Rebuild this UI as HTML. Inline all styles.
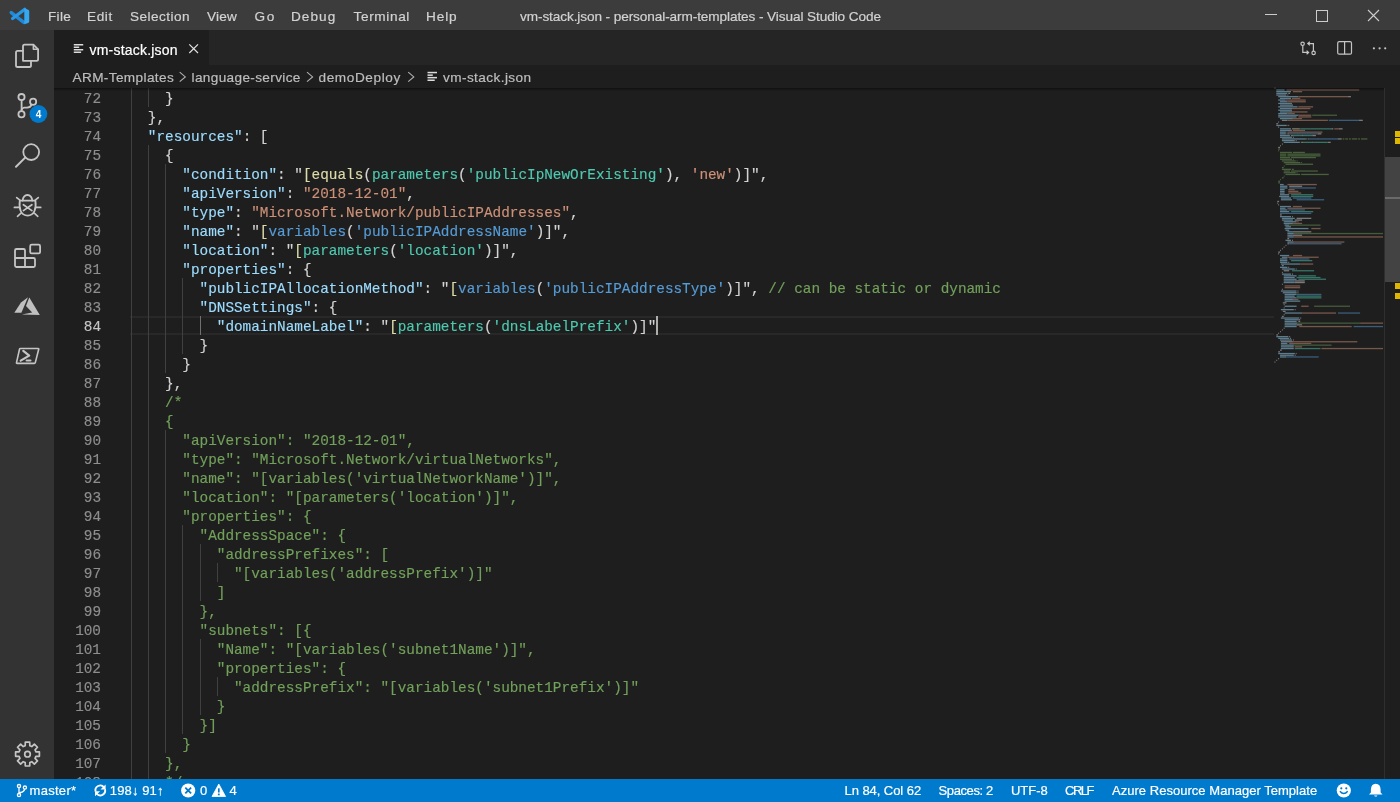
<!DOCTYPE html>
<html><head><meta charset="utf-8">
<style>
html,body{margin:0;padding:0;}
body{width:1400px;height:802px;overflow:hidden;position:relative;background:#1e1e1e;font-family:"Liberation Sans",sans-serif;}
.abs{position:absolute;}
#title{position:absolute;left:0;top:0;width:1400px;height:30px;background:#3c3c3c;}
.menu{position:absolute;top:0;height:30px;line-height:31px;font-size:13.6px;color:#cccccc;white-space:nowrap;}
#wtitle{position:absolute;top:0;left:0;width:1400px;text-align:center;height:30px;line-height:31px;font-size:13.4px;color:#cccccc;}
#act{position:absolute;left:0;top:30px;width:54px;height:749px;background:#333333;}
#tabs{position:absolute;left:54px;top:30px;width:1346px;height:35px;background:#252526;}
#tab{position:absolute;left:54px;top:30px;width:155px;height:35px;background:#1e1e1e;}
.ui{position:absolute;white-space:nowrap;}
#bc{position:absolute;left:54px;top:65px;width:1346px;height:23px;background:#1e1e1e;}
#editor{position:absolute;left:54px;top:88px;width:1346px;height:691px;background:#1e1e1e;overflow:hidden;}
.ln{-webkit-text-stroke:0.15px currentColor;position:absolute;left:130.6px;height:19px;line-height:19px;white-space:pre;font-family:"Liberation Mono",monospace;font-size:14.364px;}
.num{-webkit-text-stroke:0.15px currentColor;position:absolute;left:54px;width:47px;text-align:right;height:19px;line-height:19px;font-family:"Liberation Mono",monospace;font-size:14.364px;color:#8e8e8e;}
.num.act{color:#c6c6c6;}
.g{position:absolute;width:1px;height:19px;background:#404040;}
.g.ga{background:#707070;}
#status{position:absolute;left:0;top:779px;width:1400px;height:23px;background:#007acc;color:#ffffff;}
.st{position:absolute;top:0;height:23px;line-height:23px;font-size:12.8px;white-space:nowrap;color:#fff;}
svg{position:absolute;overflow:visible;}
.u{position:absolute;white-space:nowrap;-webkit-text-stroke:0.2px currentColor;}
</style></head><body>
<!-- title bar -->
<div id="title"></div>
<svg style="left:0;top:0" width="40" height="30" viewBox="0 0 40 30">
  <path d="M11.2 12.6 L23.8 22.4" stroke="#1f8ad8" stroke-width="3.4" stroke-linecap="round"/>
  <path d="M24.8 9.2 L12.6 18.6" stroke="#2797e6" stroke-width="3.2" stroke-linecap="round"/>
  <path d="M24.3 8.2 L28.2 9.8 Q29.2 10.2 29.2 11.2 V21.6 Q29.2 22.6 28.2 23 L24.3 24.2 Z" fill="#35a8f2"/>
</svg>
<!-- window controls -->
<div class="abs" style="left:1265px;top:14px;width:12px;height:1px;background:#cccccc"></div>
<div class="abs" style="left:1316px;top:10px;width:10px;height:10px;border:1px solid #cccccc"></div>
<svg style="left:1367px;top:9px" width="13" height="13" viewBox="0 0 13 13"><path d="M1 1 L12 12 M12 1 L1 12" stroke="#cccccc" stroke-width="1.1"/></svg>

<!-- activity bar -->
<div id="act"></div>

<!-- tabs -->
<div id="tabs"></div>
<div id="tab"></div>

<!-- breadcrumbs -->
<div id="bc"></div>

<!-- editor -->
<div id="editor"></div>
<div class="abs" style="left:130px;top:316px;width:1144px;height:15px;border-top:2px solid #282828;border-bottom:2px solid #282828"></div>
<div class="g" style="left:130.6px;top:88px"></div>
<div class="g" style="left:147.8px;top:88px"></div>
<div class="g" style="left:130.6px;top:107px"></div>
<div class="g" style="left:130.6px;top:126px"></div>
<div class="g" style="left:130.6px;top:145px"></div>
<div class="g" style="left:147.8px;top:145px"></div>
<div class="g" style="left:130.6px;top:164px"></div>
<div class="g" style="left:147.8px;top:164px"></div>
<div class="g" style="left:165.1px;top:164px"></div>
<div class="g" style="left:130.6px;top:183px"></div>
<div class="g" style="left:147.8px;top:183px"></div>
<div class="g" style="left:165.1px;top:183px"></div>
<div class="g" style="left:130.6px;top:202px"></div>
<div class="g" style="left:147.8px;top:202px"></div>
<div class="g" style="left:165.1px;top:202px"></div>
<div class="g" style="left:130.6px;top:221px"></div>
<div class="g" style="left:147.8px;top:221px"></div>
<div class="g" style="left:165.1px;top:221px"></div>
<div class="g" style="left:130.6px;top:240px"></div>
<div class="g" style="left:147.8px;top:240px"></div>
<div class="g" style="left:165.1px;top:240px"></div>
<div class="g" style="left:130.6px;top:259px"></div>
<div class="g" style="left:147.8px;top:259px"></div>
<div class="g" style="left:165.1px;top:259px"></div>
<div class="g" style="left:130.6px;top:278px"></div>
<div class="g" style="left:147.8px;top:278px"></div>
<div class="g" style="left:165.1px;top:278px"></div>
<div class="g" style="left:182.3px;top:278px"></div>
<div class="g" style="left:130.6px;top:297px"></div>
<div class="g" style="left:147.8px;top:297px"></div>
<div class="g" style="left:165.1px;top:297px"></div>
<div class="g" style="left:182.3px;top:297px"></div>
<div class="g" style="left:130.6px;top:316px"></div>
<div class="g" style="left:147.8px;top:316px"></div>
<div class="g" style="left:165.1px;top:316px"></div>
<div class="g" style="left:182.3px;top:316px"></div>
<div class="g ga" style="left:199.6px;top:316px"></div>
<div class="g" style="left:130.6px;top:335px"></div>
<div class="g" style="left:147.8px;top:335px"></div>
<div class="g" style="left:165.1px;top:335px"></div>
<div class="g" style="left:182.3px;top:335px"></div>
<div class="g" style="left:130.6px;top:354px"></div>
<div class="g" style="left:147.8px;top:354px"></div>
<div class="g" style="left:165.1px;top:354px"></div>
<div class="g" style="left:130.6px;top:373px"></div>
<div class="g" style="left:147.8px;top:373px"></div>
<div class="g" style="left:130.6px;top:392px"></div>
<div class="g" style="left:147.8px;top:392px"></div>
<div class="g" style="left:130.6px;top:411px"></div>
<div class="g" style="left:147.8px;top:411px"></div>
<div class="g" style="left:130.6px;top:430px"></div>
<div class="g" style="left:147.8px;top:430px"></div>
<div class="g" style="left:165.1px;top:430px"></div>
<div class="g" style="left:130.6px;top:449px"></div>
<div class="g" style="left:147.8px;top:449px"></div>
<div class="g" style="left:165.1px;top:449px"></div>
<div class="g" style="left:130.6px;top:468px"></div>
<div class="g" style="left:147.8px;top:468px"></div>
<div class="g" style="left:165.1px;top:468px"></div>
<div class="g" style="left:130.6px;top:487px"></div>
<div class="g" style="left:147.8px;top:487px"></div>
<div class="g" style="left:165.1px;top:487px"></div>
<div class="g" style="left:130.6px;top:506px"></div>
<div class="g" style="left:147.8px;top:506px"></div>
<div class="g" style="left:165.1px;top:506px"></div>
<div class="g" style="left:130.6px;top:525px"></div>
<div class="g" style="left:147.8px;top:525px"></div>
<div class="g" style="left:165.1px;top:525px"></div>
<div class="g" style="left:182.3px;top:525px"></div>
<div class="g" style="left:130.6px;top:544px"></div>
<div class="g" style="left:147.8px;top:544px"></div>
<div class="g" style="left:165.1px;top:544px"></div>
<div class="g" style="left:182.3px;top:544px"></div>
<div class="g" style="left:199.6px;top:544px"></div>
<div class="g" style="left:130.6px;top:563px"></div>
<div class="g" style="left:147.8px;top:563px"></div>
<div class="g" style="left:165.1px;top:563px"></div>
<div class="g" style="left:182.3px;top:563px"></div>
<div class="g" style="left:199.6px;top:563px"></div>
<div class="g" style="left:216.8px;top:563px"></div>
<div class="g" style="left:130.6px;top:582px"></div>
<div class="g" style="left:147.8px;top:582px"></div>
<div class="g" style="left:165.1px;top:582px"></div>
<div class="g" style="left:182.3px;top:582px"></div>
<div class="g" style="left:199.6px;top:582px"></div>
<div class="g" style="left:130.6px;top:601px"></div>
<div class="g" style="left:147.8px;top:601px"></div>
<div class="g" style="left:165.1px;top:601px"></div>
<div class="g" style="left:182.3px;top:601px"></div>
<div class="g" style="left:130.6px;top:620px"></div>
<div class="g" style="left:147.8px;top:620px"></div>
<div class="g" style="left:165.1px;top:620px"></div>
<div class="g" style="left:182.3px;top:620px"></div>
<div class="g" style="left:130.6px;top:639px"></div>
<div class="g" style="left:147.8px;top:639px"></div>
<div class="g" style="left:165.1px;top:639px"></div>
<div class="g" style="left:182.3px;top:639px"></div>
<div class="g" style="left:199.6px;top:639px"></div>
<div class="g" style="left:130.6px;top:658px"></div>
<div class="g" style="left:147.8px;top:658px"></div>
<div class="g" style="left:165.1px;top:658px"></div>
<div class="g" style="left:182.3px;top:658px"></div>
<div class="g" style="left:199.6px;top:658px"></div>
<div class="g" style="left:130.6px;top:677px"></div>
<div class="g" style="left:147.8px;top:677px"></div>
<div class="g" style="left:165.1px;top:677px"></div>
<div class="g" style="left:182.3px;top:677px"></div>
<div class="g" style="left:199.6px;top:677px"></div>
<div class="g" style="left:216.8px;top:677px"></div>
<div class="g" style="left:130.6px;top:696px"></div>
<div class="g" style="left:147.8px;top:696px"></div>
<div class="g" style="left:165.1px;top:696px"></div>
<div class="g" style="left:182.3px;top:696px"></div>
<div class="g" style="left:199.6px;top:696px"></div>
<div class="g" style="left:130.6px;top:715px"></div>
<div class="g" style="left:147.8px;top:715px"></div>
<div class="g" style="left:165.1px;top:715px"></div>
<div class="g" style="left:182.3px;top:715px"></div>
<div class="g" style="left:130.6px;top:734px"></div>
<div class="g" style="left:147.8px;top:734px"></div>
<div class="g" style="left:165.1px;top:734px"></div>
<div class="g" style="left:130.6px;top:753px"></div>
<div class="g" style="left:147.8px;top:753px"></div>
<div class="g" style="left:130.6px;top:772px"></div>
<div class="g" style="left:147.8px;top:772px"></div>
<div style="position:absolute;left:0;top:0;width:1400px;height:802px;will-change:transform">
<div class="num" style="top:89.5px">72</div>
<div class="num" style="top:108.5px">73</div>
<div class="num" style="top:127.5px">74</div>
<div class="num" style="top:146.5px">75</div>
<div class="num" style="top:165.5px">76</div>
<div class="num" style="top:184.5px">77</div>
<div class="num" style="top:203.5px">78</div>
<div class="num" style="top:222.5px">79</div>
<div class="num" style="top:241.5px">80</div>
<div class="num" style="top:260.5px">81</div>
<div class="num" style="top:279.5px">82</div>
<div class="num" style="top:298.5px">83</div>
<div class="num act" style="top:317.5px">84</div>
<div class="num" style="top:336.5px">85</div>
<div class="num" style="top:355.5px">86</div>
<div class="num" style="top:374.5px">87</div>
<div class="num" style="top:393.5px">88</div>
<div class="num" style="top:412.5px">89</div>
<div class="num" style="top:431.5px">90</div>
<div class="num" style="top:450.5px">91</div>
<div class="num" style="top:469.5px">92</div>
<div class="num" style="top:488.5px">93</div>
<div class="num" style="top:507.5px">94</div>
<div class="num" style="top:526.5px">95</div>
<div class="num" style="top:545.5px">96</div>
<div class="num" style="top:564.5px">97</div>
<div class="num" style="top:583.5px">98</div>
<div class="num" style="top:602.5px">99</div>
<div class="num" style="top:621.5px">100</div>
<div class="num" style="top:640.5px">101</div>
<div class="num" style="top:659.5px">102</div>
<div class="num" style="top:678.5px">103</div>
<div class="num" style="top:697.5px">104</div>
<div class="num" style="top:716.5px">105</div>
<div class="num" style="top:735.5px">106</div>
<div class="num" style="top:754.5px">107</div>
<div class="num" style="top:773.5px">108</div>
<div class="ln" style="top:89.5px"><span style="color:#d4d4d4">    }</span></div>
<div class="ln" style="top:108.5px"><span style="color:#d4d4d4">  },</span></div>
<div class="ln" style="top:127.5px"><span style="color:#d4d4d4">  </span><span style="color:#9cdcfe">&quot;resources&quot;</span><span style="color:#d4d4d4">: [</span></div>
<div class="ln" style="top:146.5px"><span style="color:#d4d4d4">    {</span></div>
<div class="ln" style="top:165.5px"><span style="color:#d4d4d4">      </span><span style="color:#9cdcfe">&quot;condition&quot;</span><span style="color:#d4d4d4">: &quot;</span><span style="color:#dcdcaa">[</span><span style="color:#dcdcaa">equals</span><span style="color:#d4d4d4">(</span><span style="color:#4ec9b0">parameters</span><span style="color:#d4d4d4">(</span><span style="color:#4ec9b0">&#x27;publicIpNewOrExisting&#x27;</span><span style="color:#d4d4d4">), </span><span style="color:#ce9178">&#x27;new&#x27;</span><span style="color:#d4d4d4">)]&quot;,</span></div>
<div class="ln" style="top:184.5px"><span style="color:#d4d4d4">      </span><span style="color:#9cdcfe">&quot;apiVersion&quot;</span><span style="color:#d4d4d4">: </span><span style="color:#ce9178">&quot;2018-12-01&quot;</span><span style="color:#d4d4d4">,</span></div>
<div class="ln" style="top:203.5px"><span style="color:#d4d4d4">      </span><span style="color:#9cdcfe">&quot;type&quot;</span><span style="color:#d4d4d4">: </span><span style="color:#ce9178">&quot;Microsoft.Network/publicIPAddresses&quot;</span><span style="color:#d4d4d4">,</span></div>
<div class="ln" style="top:222.5px"><span style="color:#d4d4d4">      </span><span style="color:#9cdcfe">&quot;name&quot;</span><span style="color:#d4d4d4">: &quot;</span><span style="color:#dcdcaa">[</span><span style="color:#569cd6">variables</span><span style="color:#d4d4d4">(</span><span style="color:#569cd6">&#x27;publicIPAddressName&#x27;</span><span style="color:#d4d4d4">)]&quot;,</span></div>
<div class="ln" style="top:241.5px"><span style="color:#d4d4d4">      </span><span style="color:#9cdcfe">&quot;location&quot;</span><span style="color:#d4d4d4">: &quot;</span><span style="color:#dcdcaa">[</span><span style="color:#4ec9b0">parameters</span><span style="color:#d4d4d4">(</span><span style="color:#4ec9b0">&#x27;location&#x27;</span><span style="color:#d4d4d4">)]&quot;,</span></div>
<div class="ln" style="top:260.5px"><span style="color:#d4d4d4">      </span><span style="color:#9cdcfe">&quot;properties&quot;</span><span style="color:#d4d4d4">: {</span></div>
<div class="ln" style="top:279.5px"><span style="color:#d4d4d4">        </span><span style="color:#9cdcfe">&quot;publicIPAllocationMethod&quot;</span><span style="color:#d4d4d4">: &quot;</span><span style="color:#dcdcaa">[</span><span style="color:#569cd6">variables</span><span style="color:#d4d4d4">(</span><span style="color:#569cd6">&#x27;publicIPAddressType&#x27;</span><span style="color:#d4d4d4">)]&quot;, </span><span style="color:#72a15b">// can be static or dynamic</span></div>
<div class="ln" style="top:298.5px"><span style="color:#d4d4d4">        </span><span style="color:#9cdcfe">&quot;DNSSettings&quot;</span><span style="color:#d4d4d4">: {</span></div>
<div class="ln" style="top:317.5px"><span style="color:#d4d4d4">          </span><span style="color:#9cdcfe">&quot;domainNameLabel&quot;</span><span style="color:#d4d4d4">: &quot;</span><span style="color:#dcdcaa">[</span><span style="color:#4ec9b0">parameters</span><span style="color:#d4d4d4">(</span><span style="color:#4ec9b0">&#x27;dnsLabelPrefix&#x27;</span><span style="color:#d4d4d4">)]&quot;</span></div>
<div class="ln" style="top:336.5px"><span style="color:#d4d4d4">        }</span></div>
<div class="ln" style="top:355.5px"><span style="color:#d4d4d4">      }</span></div>
<div class="ln" style="top:374.5px"><span style="color:#d4d4d4">    },</span></div>
<div class="ln" style="top:393.5px"><span style="color:#72a15b">    /*</span></div>
<div class="ln" style="top:412.5px"><span style="color:#72a15b">    {</span></div>
<div class="ln" style="top:431.5px"><span style="color:#72a15b">      &quot;apiVersion&quot;: &quot;2018-12-01&quot;,</span></div>
<div class="ln" style="top:450.5px"><span style="color:#72a15b">      &quot;type&quot;: &quot;Microsoft.Network/virtualNetworks&quot;,</span></div>
<div class="ln" style="top:469.5px"><span style="color:#72a15b">      &quot;name&quot;: &quot;[variables(&#x27;virtualNetworkName&#x27;)]&quot;,</span></div>
<div class="ln" style="top:488.5px"><span style="color:#72a15b">      &quot;location&quot;: &quot;[parameters(&#x27;location&#x27;)]&quot;,</span></div>
<div class="ln" style="top:507.5px"><span style="color:#72a15b">      &quot;properties&quot;: {</span></div>
<div class="ln" style="top:526.5px"><span style="color:#72a15b">        &quot;AddressSpace&quot;: {</span></div>
<div class="ln" style="top:545.5px"><span style="color:#72a15b">          &quot;addressPrefixes&quot;: [</span></div>
<div class="ln" style="top:564.5px"><span style="color:#72a15b">            &quot;[variables(&#x27;addressPrefix&#x27;)]&quot;</span></div>
<div class="ln" style="top:583.5px"><span style="color:#72a15b">          ]</span></div>
<div class="ln" style="top:602.5px"><span style="color:#72a15b">        },</span></div>
<div class="ln" style="top:621.5px"><span style="color:#72a15b">        &quot;subnets&quot;: [{</span></div>
<div class="ln" style="top:640.5px"><span style="color:#72a15b">          &quot;Name&quot;: &quot;[variables(&#x27;subnet1Name&#x27;)]&quot;,</span></div>
<div class="ln" style="top:659.5px"><span style="color:#72a15b">          &quot;properties&quot;: {</span></div>
<div class="ln" style="top:678.5px"><span style="color:#72a15b">            &quot;addressPrefix&quot;: &quot;[variables(&#x27;subnet1Prefix&#x27;)]&quot;</span></div>
<div class="ln" style="top:697.5px"><span style="color:#72a15b">          }</span></div>
<div class="ln" style="top:716.5px"><span style="color:#72a15b">        }]</span></div>
<div class="ln" style="top:735.5px"><span style="color:#72a15b">      }</span></div>
<div class="ln" style="top:754.5px"><span style="color:#72a15b">    },</span></div>
<div class="ln" style="top:773.5px"><span style="color:#72a15b">    */</span></div>
</div>
<svg style="left:0;top:0" width="1400" height="802"><g opacity="0.5"><rect x="1274.5" y="87.6" width="0.9" height="1.3" fill="#d4d4d4"/><rect x="1276.3" y="89.3" width="8.3" height="1.3" fill="#9cdcfe"/><rect x="1286.5" y="89.3" width="72.7" height="1.3" fill="#ce9178"/><rect x="1276.3" y="91.0" width="14.7" height="1.3" fill="#9cdcfe"/><rect x="1292.9" y="91.0" width="9.2" height="1.3" fill="#ce9178"/><rect x="1276.3" y="92.7" width="11.0" height="1.3" fill="#9cdcfe"/><rect x="1288.3" y="92.7" width="1.8" height="1.3" fill="#d4d4d4"/><rect x="1276.3" y="94.4" width="10.1" height="1.3" fill="#9cdcfe"/><rect x="1287.4" y="94.4" width="0.9" height="1.3" fill="#d4d4d4"/><rect x="1278.2" y="96.0" width="20.2" height="1.3" fill="#9cdcfe"/><rect x="1298.4" y="96.0" width="49.7" height="1.3" fill="#ce9178"/><rect x="1348.1" y="96.0" width="2.8" height="1.3" fill="#d4d4d4"/><rect x="1280.0" y="97.7" width="11.0" height="1.3" fill="#9cdcfe"/><rect x="1292.0" y="97.7" width="8.3" height="1.3" fill="#ce9178"/><rect x="1278.2" y="99.4" width="7.4" height="1.3" fill="#9cdcfe"/><rect x="1285.5" y="99.4" width="20.2" height="1.3" fill="#ce9178"/><rect x="1280.0" y="101.1" width="7.4" height="1.3" fill="#9cdcfe"/><rect x="1287.4" y="101.1" width="18.4" height="1.3" fill="#ce9178"/><rect x="1278.2" y="102.8" width="12.0" height="1.3" fill="#9cdcfe"/><rect x="1290.1" y="102.8" width="1.8" height="1.3" fill="#d4d4d4"/><rect x="1280.0" y="104.5" width="12.9" height="1.3" fill="#9cdcfe"/><rect x="1278.2" y="106.2" width="19.3" height="1.3" fill="#9cdcfe"/><rect x="1298.4" y="106.2" width="14.7" height="1.3" fill="#ce9178"/><rect x="1280.0" y="107.9" width="12.0" height="1.3" fill="#9cdcfe"/><rect x="1292.0" y="107.9" width="18.4" height="1.3" fill="#ce9178"/><rect x="1278.2" y="109.6" width="12.0" height="1.3" fill="#9cdcfe"/><rect x="1290.1" y="109.6" width="1.8" height="1.3" fill="#d4d4d4"/><rect x="1280.0" y="111.3" width="12.0" height="1.3" fill="#9cdcfe"/><rect x="1292.0" y="111.3" width="15.6" height="1.3" fill="#ce9178"/><rect x="1278.2" y="112.9" width="9.2" height="1.3" fill="#9cdcfe"/><rect x="1287.4" y="112.9" width="7.4" height="1.3" fill="#ce9178"/><rect x="1278.2" y="114.6" width="20.2" height="1.3" fill="#9cdcfe"/><rect x="1298.4" y="114.6" width="12.9" height="1.3" fill="#ce9178"/><rect x="1312.2" y="114.6" width="24.8" height="1.3" fill="#6a9955"/><rect x="1278.2" y="116.3" width="18.4" height="1.3" fill="#9cdcfe"/><rect x="1298.4" y="116.3" width="12.9" height="1.3" fill="#ce9178"/><rect x="1280.0" y="118.0" width="12.9" height="1.3" fill="#9cdcfe"/><rect x="1292.9" y="118.0" width="9.2" height="1.3" fill="#ce9178"/><rect x="1281.9" y="119.7" width="5.5" height="1.3" fill="#d4d4d4"/><rect x="1287.4" y="119.7" width="40.5" height="1.3" fill="#ce9178"/><rect x="1328.8" y="119.7" width="30.4" height="1.3" fill="#569cd6"/><rect x="1359.1" y="119.7" width="3.7" height="1.3" fill="#d4d4d4"/><rect x="1278.2" y="121.4" width="0.9" height="1.3" fill="#d4d4d4"/><rect x="1276.3" y="123.1" width="1.8" height="1.3" fill="#d4d4d4"/><rect x="1276.3" y="124.8" width="10.1" height="1.3" fill="#9cdcfe"/><rect x="1286.5" y="124.8" width="0.9" height="1.3" fill="#d4d4d4"/><rect x="1288.3" y="124.8" width="0.9" height="1.3" fill="#d4d4d4"/><rect x="1278.2" y="126.5" width="0.9" height="1.3" fill="#d4d4d4"/><rect x="1280.0" y="128.2" width="10.1" height="1.3" fill="#9cdcfe"/><rect x="1290.1" y="128.2" width="0.9" height="1.3" fill="#d4d4d4"/><rect x="1292.0" y="128.2" width="0.9" height="1.3" fill="#d4d4d4"/><rect x="1292.9" y="128.2" width="6.4" height="1.3" fill="#dcdcaa"/><rect x="1299.3" y="128.2" width="0.9" height="1.3" fill="#d4d4d4"/><rect x="1300.3" y="128.2" width="9.2" height="1.3" fill="#4ec9b0"/><rect x="1309.5" y="128.2" width="0.9" height="1.3" fill="#d4d4d4"/><rect x="1310.4" y="128.2" width="21.2" height="1.3" fill="#4ec9b0"/><rect x="1331.5" y="128.2" width="1.8" height="1.3" fill="#d4d4d4"/><rect x="1334.3" y="128.2" width="4.6" height="1.3" fill="#ce9178"/><rect x="1338.9" y="128.2" width="3.7" height="1.3" fill="#d4d4d4"/><rect x="1280.0" y="129.8" width="11.0" height="1.3" fill="#9cdcfe"/><rect x="1291.1" y="129.8" width="0.9" height="1.3" fill="#d4d4d4"/><rect x="1292.9" y="129.8" width="11.0" height="1.3" fill="#ce9178"/><rect x="1303.9" y="129.8" width="0.9" height="1.3" fill="#d4d4d4"/><rect x="1280.0" y="131.5" width="5.5" height="1.3" fill="#9cdcfe"/><rect x="1285.5" y="131.5" width="0.9" height="1.3" fill="#d4d4d4"/><rect x="1287.4" y="131.5" width="34.0" height="1.3" fill="#ce9178"/><rect x="1321.4" y="131.5" width="0.9" height="1.3" fill="#d4d4d4"/><rect x="1280.0" y="133.2" width="5.5" height="1.3" fill="#9cdcfe"/><rect x="1285.5" y="133.2" width="0.9" height="1.3" fill="#d4d4d4"/><rect x="1287.4" y="133.2" width="0.9" height="1.3" fill="#d4d4d4"/><rect x="1288.3" y="133.2" width="0.9" height="1.3" fill="#dcdcaa"/><rect x="1289.2" y="133.2" width="8.3" height="1.3" fill="#569cd6"/><rect x="1297.5" y="133.2" width="0.9" height="1.3" fill="#d4d4d4"/><rect x="1298.4" y="133.2" width="19.3" height="1.3" fill="#569cd6"/><rect x="1317.7" y="133.2" width="3.7" height="1.3" fill="#d4d4d4"/><rect x="1280.0" y="134.9" width="9.2" height="1.3" fill="#9cdcfe"/><rect x="1289.2" y="134.9" width="0.9" height="1.3" fill="#d4d4d4"/><rect x="1291.1" y="134.9" width="0.9" height="1.3" fill="#d4d4d4"/><rect x="1292.0" y="134.9" width="0.9" height="1.3" fill="#dcdcaa"/><rect x="1292.9" y="134.9" width="9.2" height="1.3" fill="#4ec9b0"/><rect x="1302.1" y="134.9" width="0.9" height="1.3" fill="#d4d4d4"/><rect x="1303.0" y="134.9" width="9.2" height="1.3" fill="#4ec9b0"/><rect x="1312.2" y="134.9" width="3.7" height="1.3" fill="#d4d4d4"/><rect x="1280.0" y="136.6" width="11.0" height="1.3" fill="#9cdcfe"/><rect x="1291.1" y="136.6" width="0.9" height="1.3" fill="#d4d4d4"/><rect x="1292.9" y="136.6" width="0.9" height="1.3" fill="#d4d4d4"/><rect x="1281.9" y="138.3" width="23.9" height="1.3" fill="#9cdcfe"/><rect x="1305.8" y="138.3" width="0.9" height="1.3" fill="#d4d4d4"/><rect x="1307.6" y="138.3" width="0.9" height="1.3" fill="#d4d4d4"/><rect x="1308.5" y="138.3" width="0.9" height="1.3" fill="#dcdcaa"/><rect x="1309.5" y="138.3" width="8.3" height="1.3" fill="#569cd6"/><rect x="1317.7" y="138.3" width="0.9" height="1.3" fill="#d4d4d4"/><rect x="1318.7" y="138.3" width="19.3" height="1.3" fill="#569cd6"/><rect x="1338.0" y="138.3" width="3.7" height="1.3" fill="#d4d4d4"/><rect x="1342.6" y="138.3" width="1.8" height="1.3" fill="#72a15b"/><rect x="1345.3" y="138.3" width="2.8" height="1.3" fill="#72a15b"/><rect x="1349.0" y="138.3" width="1.8" height="1.3" fill="#72a15b"/><rect x="1351.8" y="138.3" width="5.5" height="1.3" fill="#72a15b"/><rect x="1358.2" y="138.3" width="1.8" height="1.3" fill="#72a15b"/><rect x="1361.0" y="138.3" width="6.4" height="1.3" fill="#72a15b"/><rect x="1281.9" y="140.0" width="12.0" height="1.3" fill="#9cdcfe"/><rect x="1293.8" y="140.0" width="0.9" height="1.3" fill="#d4d4d4"/><rect x="1295.7" y="140.0" width="0.9" height="1.3" fill="#d4d4d4"/><rect x="1283.7" y="141.7" width="15.6" height="1.3" fill="#9cdcfe"/><rect x="1299.3" y="141.7" width="0.9" height="1.3" fill="#d4d4d4"/><rect x="1301.2" y="141.7" width="0.9" height="1.3" fill="#d4d4d4"/><rect x="1302.1" y="141.7" width="0.9" height="1.3" fill="#dcdcaa"/><rect x="1303.0" y="141.7" width="9.2" height="1.3" fill="#4ec9b0"/><rect x="1312.2" y="141.7" width="0.9" height="1.3" fill="#d4d4d4"/><rect x="1313.1" y="141.7" width="14.7" height="1.3" fill="#4ec9b0"/><rect x="1327.9" y="141.7" width="2.8" height="1.3" fill="#d4d4d4"/><rect x="1281.9" y="143.4" width="0.9" height="1.3" fill="#d4d4d4"/><rect x="1280.0" y="145.1" width="0.9" height="1.3" fill="#d4d4d4"/><rect x="1278.2" y="146.8" width="1.8" height="1.3" fill="#d4d4d4"/><rect x="1278.2" y="148.4" width="1.8" height="1.3" fill="#72a15b"/><rect x="1278.2" y="150.1" width="0.9" height="1.3" fill="#72a15b"/><rect x="1280.0" y="151.8" width="12.0" height="1.3" fill="#72a15b"/><rect x="1292.9" y="151.8" width="12.0" height="1.3" fill="#72a15b"/><rect x="1280.0" y="153.5" width="6.4" height="1.3" fill="#72a15b"/><rect x="1287.4" y="153.5" width="33.1" height="1.3" fill="#72a15b"/><rect x="1280.0" y="155.2" width="6.4" height="1.3" fill="#72a15b"/><rect x="1287.4" y="155.2" width="33.1" height="1.3" fill="#72a15b"/><rect x="1280.0" y="156.9" width="10.1" height="1.3" fill="#72a15b"/><rect x="1291.1" y="156.9" width="24.8" height="1.3" fill="#72a15b"/><rect x="1280.0" y="158.6" width="12.0" height="1.3" fill="#72a15b"/><rect x="1292.9" y="158.6" width="0.9" height="1.3" fill="#72a15b"/><rect x="1281.9" y="160.3" width="13.8" height="1.3" fill="#72a15b"/><rect x="1296.6" y="160.3" width="0.9" height="1.3" fill="#72a15b"/><rect x="1283.7" y="162.0" width="16.6" height="1.3" fill="#72a15b"/><rect x="1301.2" y="162.0" width="0.9" height="1.3" fill="#72a15b"/><rect x="1285.5" y="163.6" width="27.6" height="1.3" fill="#72a15b"/><rect x="1283.7" y="165.3" width="0.9" height="1.3" fill="#72a15b"/><rect x="1281.9" y="167.0" width="1.8" height="1.3" fill="#72a15b"/><rect x="1281.9" y="168.7" width="9.2" height="1.3" fill="#72a15b"/><rect x="1292.0" y="168.7" width="1.8" height="1.3" fill="#72a15b"/><rect x="1283.7" y="170.4" width="6.4" height="1.3" fill="#72a15b"/><rect x="1291.1" y="170.4" width="26.7" height="1.3" fill="#72a15b"/><rect x="1283.7" y="172.1" width="12.0" height="1.3" fill="#72a15b"/><rect x="1296.6" y="172.1" width="0.9" height="1.3" fill="#72a15b"/><rect x="1285.5" y="173.8" width="14.7" height="1.3" fill="#72a15b"/><rect x="1301.2" y="173.8" width="27.6" height="1.3" fill="#72a15b"/><rect x="1283.7" y="175.5" width="0.9" height="1.3" fill="#72a15b"/><rect x="1281.9" y="177.2" width="1.8" height="1.3" fill="#72a15b"/><rect x="1280.0" y="178.9" width="0.9" height="1.3" fill="#72a15b"/><rect x="1278.2" y="180.6" width="1.8" height="1.3" fill="#72a15b"/><rect x="1278.2" y="182.2" width="1.8" height="1.3" fill="#72a15b"/><rect x="1280.0" y="183.9" width="3.7" height="1.3" fill="#9cdcfe"/><rect x="1287.4" y="183.9" width="29.4" height="1.3" fill="#ce9178"/><rect x="1280.0" y="185.6" width="7.4" height="1.3" fill="#9cdcfe"/><rect x="1289.2" y="185.6" width="12.9" height="1.3" fill="#d4d4d4"/><rect x="1280.0" y="187.3" width="7.4" height="1.3" fill="#9cdcfe"/><rect x="1289.2" y="187.3" width="26.7" height="1.3" fill="#569cd6"/><rect x="1280.0" y="189.0" width="4.6" height="1.3" fill="#9cdcfe"/><rect x="1288.3" y="189.0" width="6.4" height="1.3" fill="#ce9178"/><rect x="1280.0" y="190.7" width="4.6" height="1.3" fill="#9cdcfe"/><rect x="1288.3" y="190.7" width="10.1" height="1.3" fill="#ce9178"/><rect x="1280.0" y="192.4" width="4.6" height="1.3" fill="#9cdcfe"/><rect x="1288.3" y="192.4" width="12.9" height="1.3" fill="#ce9178"/><rect x="1280.0" y="194.1" width="9.2" height="1.3" fill="#9cdcfe"/><rect x="1291.1" y="194.1" width="22.1" height="1.3" fill="#4ec9b0"/><rect x="1279.1" y="195.8" width="10.1" height="1.3" fill="#9cdcfe"/><rect x="1291.1" y="195.8" width="22.1" height="1.3" fill="#4ec9b0"/><rect x="1280.9" y="197.4" width="10.1" height="1.3" fill="#9cdcfe"/><rect x="1292.9" y="197.4" width="18.4" height="1.3" fill="#569cd6"/><rect x="1280.9" y="199.1" width="11.0" height="1.3" fill="#9cdcfe"/><rect x="1296.6" y="199.1" width="27.6" height="1.3" fill="#569cd6"/><rect x="1277.3" y="200.8" width="1.8" height="1.3" fill="#d4d4d4"/><rect x="1277.3" y="202.5" width="0.9" height="1.3" fill="#d4d4d4"/><rect x="1278.2" y="204.2" width="0.9" height="1.3" fill="#d4d4d4"/><rect x="1280.0" y="205.9" width="11.0" height="1.3" fill="#9cdcfe"/><rect x="1292.9" y="205.9" width="9.2" height="1.3" fill="#ce9178"/><rect x="1280.0" y="207.6" width="5.5" height="1.3" fill="#9cdcfe"/><rect x="1287.4" y="207.6" width="33.1" height="1.3" fill="#ce9178"/><rect x="1280.0" y="209.3" width="7.4" height="1.3" fill="#9cdcfe"/><rect x="1288.3" y="209.3" width="16.6" height="1.3" fill="#569cd6"/><rect x="1280.0" y="211.0" width="9.2" height="1.3" fill="#9cdcfe"/><rect x="1291.1" y="211.0" width="22.1" height="1.3" fill="#4ec9b0"/><rect x="1280.0" y="212.7" width="31.3" height="1.3" fill="#569cd6"/><rect x="1280.0" y="214.3" width="1.8" height="1.3" fill="#d4d4d4"/><rect x="1280.0" y="216.0" width="11.0" height="1.3" fill="#9cdcfe"/><rect x="1292.0" y="216.0" width="0.9" height="1.3" fill="#d4d4d4"/><rect x="1281.9" y="217.7" width="12.9" height="1.3" fill="#9cdcfe"/><rect x="1296.6" y="217.7" width="14.7" height="1.3" fill="#d4d4d4"/><rect x="1281.9" y="219.4" width="11.0" height="1.3" fill="#9cdcfe"/><rect x="1294.7" y="219.4" width="7.4" height="1.3" fill="#d4d4d4"/><rect x="1283.7" y="221.1" width="12.9" height="1.3" fill="#9cdcfe"/><rect x="1297.5" y="221.1" width="0.9" height="1.3" fill="#d4d4d4"/><rect x="1283.7" y="222.8" width="9.2" height="1.3" fill="#9cdcfe"/><rect x="1292.9" y="222.8" width="9.2" height="1.3" fill="#ce9178"/><rect x="1284.6" y="224.5" width="4.6" height="1.3" fill="#9cdcfe"/><rect x="1289.2" y="224.5" width="31.3" height="1.3" fill="#6a9955"/><rect x="1285.5" y="226.2" width="5.5" height="1.3" fill="#9cdcfe"/><rect x="1284.6" y="227.9" width="23.9" height="1.3" fill="#9cdcfe"/><rect x="1311.3" y="227.9" width="9.2" height="1.3" fill="#ce9178"/><rect x="1285.5" y="229.6" width="3.7" height="1.3" fill="#9cdcfe"/><rect x="1287.4" y="231.2" width="5.5" height="1.3" fill="#9cdcfe"/><rect x="1292.9" y="231.2" width="18.4" height="1.3" fill="#d4d4d4"/><rect x="1287.4" y="232.9" width="6.4" height="1.3" fill="#9cdcfe"/><rect x="1293.8" y="232.9" width="89.2" height="1.3" fill="#6a9955"/><rect x="1287.4" y="234.6" width="5.5" height="1.3" fill="#9cdcfe"/><rect x="1292.9" y="234.6" width="9.2" height="1.3" fill="#d4d4d4"/><rect x="1287.4" y="236.3" width="6.4" height="1.3" fill="#9cdcfe"/><rect x="1293.8" y="236.3" width="89.2" height="1.3" fill="#ce9178"/><rect x="1287.4" y="238.0" width="1.8" height="1.3" fill="#d4d4d4"/><rect x="1285.5" y="239.7" width="5.5" height="1.3" fill="#9cdcfe"/><rect x="1292.0" y="239.7" width="0.9" height="1.3" fill="#d4d4d4"/><rect x="1287.4" y="241.4" width="6.4" height="1.3" fill="#d4d4d4"/><rect x="1293.8" y="241.4" width="50.6" height="1.3" fill="#ce9178"/><rect x="1287.4" y="243.1" width="1.8" height="1.3" fill="#9cdcfe"/><rect x="1289.2" y="243.1" width="52.4" height="1.3" fill="#569cd6"/><rect x="1285.5" y="244.8" width="0.9" height="1.3" fill="#d4d4d4"/><rect x="1283.7" y="246.5" width="0.9" height="1.3" fill="#d4d4d4"/><rect x="1281.9" y="248.1" width="0.9" height="1.3" fill="#d4d4d4"/><rect x="1280.0" y="249.8" width="0.9" height="1.3" fill="#d4d4d4"/><rect x="1278.2" y="251.5" width="1.8" height="1.3" fill="#d4d4d4"/><rect x="1278.2" y="253.2" width="0.9" height="1.3" fill="#d4d4d4"/><rect x="1280.0" y="254.9" width="9.2" height="1.3" fill="#9cdcfe"/><rect x="1292.9" y="254.9" width="9.2" height="1.3" fill="#ce9178"/><rect x="1281.9" y="256.6" width="5.5" height="1.3" fill="#9cdcfe"/><rect x="1287.4" y="256.6" width="31.3" height="1.3" fill="#ce9178"/><rect x="1280.0" y="258.3" width="7.4" height="1.3" fill="#9cdcfe"/><rect x="1289.2" y="258.3" width="20.2" height="1.3" fill="#569cd6"/><rect x="1280.0" y="260.0" width="7.4" height="1.3" fill="#9cdcfe"/><rect x="1291.1" y="260.0" width="21.2" height="1.3" fill="#4ec9b0"/><rect x="1280.0" y="261.7" width="7.4" height="1.3" fill="#9cdcfe"/><rect x="1288.3" y="261.7" width="0.9" height="1.3" fill="#d4d4d4"/><rect x="1280.9" y="263.4" width="19.3" height="1.3" fill="#9cdcfe"/><rect x="1300.3" y="263.4" width="12.9" height="1.3" fill="#ce9178"/><rect x="1281.9" y="265.0" width="1.8" height="1.3" fill="#d4d4d4"/><rect x="1280.0" y="266.7" width="7.4" height="1.3" fill="#9cdcfe"/><rect x="1288.3" y="266.7" width="0.9" height="1.3" fill="#d4d4d4"/><rect x="1281.9" y="268.4" width="12.9" height="1.3" fill="#9cdcfe"/><rect x="1295.7" y="268.4" width="0.9" height="1.3" fill="#d4d4d4"/><rect x="1283.7" y="270.1" width="5.5" height="1.3" fill="#d4d4d4"/><rect x="1292.0" y="270.1" width="22.1" height="1.3" fill="#4ec9b0"/><rect x="1281.9" y="271.8" width="0.9" height="1.3" fill="#d4d4d4"/><rect x="1281.9" y="273.5" width="9.2" height="1.3" fill="#9cdcfe"/><rect x="1292.0" y="273.5" width="0.9" height="1.3" fill="#d4d4d4"/><rect x="1283.7" y="275.2" width="12.9" height="1.3" fill="#9cdcfe"/><rect x="1298.4" y="275.2" width="17.5" height="1.3" fill="#4ec9b0"/><rect x="1283.7" y="276.9" width="11.0" height="1.3" fill="#9cdcfe"/><rect x="1296.6" y="276.9" width="23.9" height="1.3" fill="#4ec9b0"/><rect x="1283.7" y="278.6" width="12.9" height="1.3" fill="#9cdcfe"/><rect x="1298.4" y="278.6" width="27.6" height="1.3" fill="#4ec9b0"/><rect x="1283.7" y="280.3" width="11.0" height="1.3" fill="#9cdcfe"/><rect x="1294.7" y="280.3" width="10.1" height="1.3" fill="#d4d4d4"/><rect x="1283.7" y="281.9" width="11.0" height="1.3" fill="#9cdcfe"/><rect x="1294.7" y="281.9" width="10.1" height="1.3" fill="#d4d4d4"/><rect x="1281.9" y="283.6" width="0.9" height="1.3" fill="#d4d4d4"/><rect x="1284.6" y="285.3" width="15.6" height="1.3" fill="#ce9178"/><rect x="1284.6" y="287.0" width="15.6" height="1.3" fill="#ce9178"/><rect x="1281.9" y="288.7" width="0.9" height="1.3" fill="#d4d4d4"/><rect x="1280.9" y="290.4" width="15.6" height="1.3" fill="#9cdcfe"/><rect x="1297.5" y="290.4" width="0.9" height="1.3" fill="#d4d4d4"/><rect x="1282.8" y="292.1" width="13.8" height="1.3" fill="#9cdcfe"/><rect x="1297.5" y="292.1" width="0.9" height="1.3" fill="#d4d4d4"/><rect x="1284.6" y="293.8" width="12.0" height="1.3" fill="#9cdcfe"/><rect x="1296.6" y="293.8" width="24.8" height="1.3" fill="#569cd6"/><rect x="1284.6" y="295.5" width="10.1" height="1.3" fill="#9cdcfe"/><rect x="1296.6" y="295.5" width="24.8" height="1.3" fill="#4ec9b0"/><rect x="1284.6" y="297.2" width="12.0" height="1.3" fill="#9cdcfe"/><rect x="1296.6" y="297.2" width="24.8" height="1.3" fill="#4ec9b0"/><rect x="1284.6" y="298.9" width="8.3" height="1.3" fill="#9cdcfe"/><rect x="1292.9" y="298.9" width="5.5" height="1.3" fill="#ce9178"/><rect x="1284.6" y="300.5" width="15.6" height="1.3" fill="#9cdcfe"/><rect x="1282.8" y="302.2" width="3.7" height="1.3" fill="#d4d4d4"/><rect x="1283.7" y="303.9" width="0.9" height="1.3" fill="#d4d4d4"/><rect x="1284.6" y="305.6" width="12.0" height="1.3" fill="#9cdcfe"/><rect x="1301.2" y="305.6" width="7.4" height="1.3" fill="#ce9178"/><rect x="1314.1" y="305.6" width="35.9" height="1.3" fill="#6a9955"/><rect x="1283.7" y="307.3" width="0.9" height="1.3" fill="#d4d4d4"/><rect x="1280.9" y="309.0" width="12.9" height="1.3" fill="#9cdcfe"/><rect x="1294.7" y="309.0" width="0.9" height="1.3" fill="#d4d4d4"/><rect x="1282.8" y="310.7" width="2.8" height="1.3" fill="#d4d4d4"/><rect x="1284.6" y="312.4" width="17.5" height="1.3" fill="#9cdcfe"/><rect x="1302.1" y="312.4" width="34.0" height="1.3" fill="#ce9178"/><rect x="1338.0" y="312.4" width="22.1" height="1.3" fill="#569cd6"/><rect x="1283.7" y="314.1" width="0.9" height="1.3" fill="#d4d4d4"/><rect x="1281.9" y="315.8" width="1.8" height="1.3" fill="#d4d4d4"/><rect x="1280.9" y="317.4" width="18.4" height="1.3" fill="#9cdcfe"/><rect x="1300.3" y="317.4" width="0.9" height="1.3" fill="#d4d4d4"/><rect x="1284.6" y="319.1" width="13.8" height="1.3" fill="#9cdcfe"/><rect x="1298.4" y="319.1" width="1.8" height="1.3" fill="#d4d4d4"/><rect x="1284.6" y="320.8" width="12.0" height="1.3" fill="#9cdcfe"/><rect x="1298.4" y="320.8" width="1.8" height="1.3" fill="#d4d4d4"/><rect x="1284.6" y="322.5" width="12.9" height="1.3" fill="#9cdcfe"/><rect x="1297.5" y="322.5" width="62.6" height="1.3" fill="#6a9955"/><rect x="1360.1" y="322.5" width="23.0" height="1.3" fill="#ce9178"/><rect x="1284.6" y="324.2" width="12.0" height="1.3" fill="#9cdcfe"/><rect x="1296.6" y="324.2" width="5.5" height="1.3" fill="#d4d4d4"/><rect x="1284.6" y="325.9" width="12.0" height="1.3" fill="#9cdcfe"/><rect x="1299.3" y="325.9" width="52.4" height="1.3" fill="#ce9178"/><rect x="1353.6" y="325.9" width="29.4" height="1.3" fill="#569cd6"/><rect x="1283.7" y="327.6" width="0.9" height="1.3" fill="#d4d4d4"/><rect x="1281.9" y="329.3" width="0.9" height="1.3" fill="#d4d4d4"/><rect x="1280.0" y="331.0" width="0.9" height="1.3" fill="#d4d4d4"/><rect x="1278.2" y="332.6" width="0.9" height="1.3" fill="#d4d4d4"/><rect x="1276.3" y="334.3" width="1.8" height="1.3" fill="#d4d4d4"/><rect x="1276.3" y="336.0" width="12.0" height="1.3" fill="#9cdcfe"/><rect x="1289.2" y="336.0" width="0.9" height="1.3" fill="#d4d4d4"/><rect x="1278.2" y="337.7" width="11.0" height="1.3" fill="#9cdcfe"/><rect x="1290.1" y="337.7" width="0.9" height="1.3" fill="#d4d4d4"/><rect x="1280.0" y="339.4" width="12.0" height="1.3" fill="#9cdcfe"/><rect x="1292.9" y="339.4" width="0.9" height="1.3" fill="#d4d4d4"/><rect x="1280.9" y="341.1" width="12.0" height="1.3" fill="#d4d4d4"/><rect x="1292.9" y="341.1" width="64.4" height="1.3" fill="#ce9178"/><rect x="1280.9" y="342.8" width="6.4" height="1.3" fill="#9cdcfe"/><rect x="1289.2" y="342.8" width="22.1" height="1.3" fill="#ce9178"/><rect x="1280.9" y="344.5" width="12.9" height="1.3" fill="#9cdcfe"/><rect x="1293.8" y="344.5" width="37.7" height="1.3" fill="#6a9955"/><rect x="1280.9" y="346.2" width="12.9" height="1.3" fill="#9cdcfe"/><rect x="1294.7" y="346.2" width="7.4" height="1.3" fill="#ce9178"/><rect x="1280.9" y="347.9" width="12.9" height="1.3" fill="#9cdcfe"/><rect x="1294.7" y="347.9" width="25.8" height="1.3" fill="#4ec9b0"/><rect x="1321.4" y="347.9" width="61.6" height="1.3" fill="#ce9178"/><rect x="1280.0" y="349.5" width="1.8" height="1.3" fill="#d4d4d4"/><rect x="1278.2" y="351.2" width="1.8" height="1.3" fill="#d4d4d4"/><rect x="1278.2" y="352.9" width="16.6" height="1.3" fill="#9cdcfe"/><rect x="1295.7" y="352.9" width="0.9" height="1.3" fill="#d4d4d4"/><rect x="1280.0" y="354.6" width="13.8" height="1.3" fill="#9cdcfe"/><rect x="1294.7" y="354.6" width="0.9" height="1.3" fill="#d4d4d4"/><rect x="1280.0" y="356.3" width="6.4" height="1.3" fill="#9cdcfe"/><rect x="1286.5" y="356.3" width="32.2" height="1.3" fill="#569cd6"/><rect x="1278.2" y="358.0" width="0.9" height="1.3" fill="#d4d4d4"/><rect x="1276.3" y="359.7" width="0.9" height="1.3" fill="#d4d4d4"/><rect x="1274.5" y="361.4" width="0.9" height="1.3" fill="#d4d4d4"/></g></svg>
<div class="abs" style="left:656px;top:316px;width:2px;height:19px;background:#aeafad"></div>
<div class="abs" style="left:1384px;top:88px;width:1px;height:691px;background:#2f2f2f"></div>
<div class="abs" style="left:1385px;top:157px;width:15px;height:125px;background:#434343"></div>
<div class="abs" style="left:1385px;top:197px;width:15px;height:2px;background:#6a6a6a"></div>
<div class="abs" style="left:1395px;top:131px;width:5px;height:6px;background:#dcb600"></div>
<div class="abs" style="left:1395px;top:138px;width:5px;height:6px;background:#dcb600"></div>
<div class="abs" style="left:1395px;top:283px;width:5px;height:6px;background:#dcb600"></div>
<div class="abs" style="left:1395px;top:293px;width:5px;height:6px;background:#dcb600"></div>
<div class="abs" style="left:54px;top:88px;width:1330px;height:3px;background:linear-gradient(rgba(0,0,0,0.45),rgba(0,0,0,0))"></div>

<!-- status bar -->
<div id="status"></div>
<div style="position:absolute;left:0;top:0;width:1400px;height:802px;will-change:transform">
<div class="u" style="left:48.0px;top:9.0px;font-size:13.6px;line-height:16.32px;letter-spacing:0.30px;color:#d2d2d2">File</div>
<div class="u" style="left:87.0px;top:9.0px;font-size:13.6px;line-height:16.32px;letter-spacing:0.60px;color:#d2d2d2">Edit</div>
<div class="u" style="left:130.0px;top:9.0px;font-size:13.6px;line-height:16.32px;letter-spacing:0.45px;color:#d2d2d2">Selection</div>
<div class="u" style="left:207.0px;top:9.0px;font-size:13.6px;line-height:16.32px;letter-spacing:0.18px;color:#d2d2d2">View</div>
<div class="u" style="left:254.5px;top:9.0px;font-size:13.6px;line-height:16.32px;letter-spacing:1.62px;color:#d2d2d2">Go</div>
<div class="u" style="left:291.0px;top:9.0px;font-size:13.6px;line-height:16.32px;letter-spacing:1.04px;color:#d2d2d2">Debug</div>
<div class="u" style="left:353.5px;top:9.0px;font-size:13.6px;line-height:16.32px;letter-spacing:0.64px;color:#d2d2d2">Terminal</div>
<div class="u" style="left:426.0px;top:9.0px;font-size:13.6px;line-height:16.32px;letter-spacing:0.90px;color:#d2d2d2">Help</div>
<div class="u" style="left:520.0px;top:9.0px;font-size:13.6px;line-height:16.32px;letter-spacing:-0.09px;color:#d2d2d2">vm-stack.json - personal-arm-templates - Visual Studio Code</div>
<div class="u" style="left:89.5px;top:41.5px;font-size:14.0px;line-height:16.80px;letter-spacing:0.21px;color:#ffffff">vm-stack.json</div>
<div class="u" style="left:72.5px;top:70.1px;font-size:13.6px;line-height:16.32px;letter-spacing:0.38px;color:#bdbdbd">ARM-Templates</div>
<div class="u" style="left:191.5px;top:70.1px;font-size:13.6px;line-height:16.32px;letter-spacing:0.36px;color:#bdbdbd">language-service</div>
<div class="u" style="left:318.5px;top:70.1px;font-size:13.6px;line-height:16.32px;letter-spacing:0.60px;color:#bdbdbd">demoDeploy</div>
<div class="u" style="left:443.0px;top:70.1px;font-size:13.6px;line-height:16.32px;letter-spacing:0.42px;color:#bdbdbd">vm-stack.json</div>
<div class="u" style="left:29.5px;top:782.6px;font-size:13.0px;line-height:15.60px;letter-spacing:0.30px;color:#ffffff">master*</div>
<div class="u" style="left:109.8px;top:782.6px;font-size:13.0px;line-height:15.60px;letter-spacing:0.13px;color:#ffffff">198↓ 91↑</div>
<div class="u" style="left:200.0px;top:782.6px;font-size:13.0px;line-height:15.60px;letter-spacing:0.00px;color:#ffffff">0</div>
<div class="u" style="left:229.5px;top:782.6px;font-size:13.0px;line-height:15.60px;letter-spacing:0.00px;color:#ffffff">4</div>
<div class="u" style="left:844.5px;top:782.6px;font-size:13.0px;line-height:15.60px;letter-spacing:-0.06px;color:#ffffff">Ln 84, Col 62</div>
<div class="u" style="left:938.5px;top:782.6px;font-size:13.0px;line-height:15.60px;letter-spacing:-0.38px;color:#ffffff">Spaces: 2</div>
<div class="u" style="left:1011.0px;top:782.6px;font-size:13.0px;line-height:15.60px;letter-spacing:-0.04px;color:#ffffff">UTF-8</div>
<div class="u" style="left:1065.0px;top:782.6px;font-size:13.0px;line-height:15.60px;letter-spacing:-1.50px;color:#ffffff">CRLF</div>
<div class="u" style="left:1112.0px;top:782.6px;font-size:13.0px;line-height:15.60px;letter-spacing:0.03px;color:#ffffff">Azure Resource Manager Template</div>
</div>
<svg style="left:0;top:0" width="1400" height="802" viewBox="0 0 1400 802">
<g fill="none" stroke="#c5c5c5" stroke-width="1.8" stroke-linejoin="round" stroke-linecap="round">
  <!-- explorer -->
  <path d="M23 60.8 V46.2 Q23 44.6 24.6 44.6 H33.4 L38.1 49.3 V59.2 Q38.1 60.8 36.5 60.8 Z"/>
  <path d="M33.4 44.8 V49.3 H38" stroke-width="1.6"/>
  <path d="M23 50.8 H17.6 Q16 50.8 16 52.4 V65.4 Q16 67 17.6 67 H29.4 Q31 67 31 65.4 V60.8"/>
  <!-- scm -->
  <circle cx="21.5" cy="97.1" r="3.1"/>
  <circle cx="33.1" cy="101.7" r="3.1"/>
  <circle cx="21.5" cy="114.2" r="3.1"/>
  <path d="M21.6 100.3 V111"/>
  <path d="M31.6 104.6 Q30.5 107.5 27 107.6 H24 Q22 107.8 21.6 110"/>
  <!-- search -->
  <circle cx="31.2" cy="152.1" r="7.9"/>
  <path d="M16 166.8 L25.4 157.4" stroke-width="2"/>
  <!-- debug -->
  <path d="M22.7 200.6 A4.75 5.6 0 0 1 32.2 200.6"/>
  <path d="M19.8 200.6 H35.4 Q36.2 207 34.5 211 Q32.5 215.6 27.6 215.6 Q22.7 215.6 20.7 211 Q19 207 19.8 200.6 Z"/>
  <path d="M16.7 197.6 L19.9 200.2 M38.3 197.6 L35.2 200.2 M14.4 207.4 H19.4 M35.8 207.4 H40.7 M17.5 216.3 L21 213.2 M37.8 216.3 L34.3 213.2 M23.4 204.7 L31.9 210.6 M31.9 204.7 L23.4 210.6" stroke-width="1.7"/>
  <!-- extensions -->
  <path d="M16.5 249 H23.5 Q25 249 25 250.5 V258 H33.5 Q35 258 35 259.5 V265.5 Q35 267 33.5 267 H16.5 Q15 267 15 265.5 V250.5 Q15 249 16.5 249 Z M15 258 H25 V267"/>
  <rect x="30.2" y="244.7" width="9.9" height="8.7" rx="1.5"/>
  <!-- powershell -->
  <path d="M20.3 348.5 H38.2 Q38.9 348.5 38.7 349.3 L35.3 362.6 Q35.1 363.4 34.3 363.4 H17 Q16.3 363.4 16.5 362.6 L19.5 349.3 Q19.7 348.5 20.3 348.5 Z" stroke-width="1.6"/>
  <path d="M23.3 350.9 L29.2 355.6 L20.7 360.6" stroke-width="2.2"/>
  <path d="M26.6 360.5 H30.5" stroke-width="2"/>
  <!-- gear -->
  <path d="M35.88 751.78 L39.40 751.89 L39.40 756.31 L35.88 756.42 L35.07 758.38 L37.47 760.95 L34.35 764.07 L31.78 761.67 L29.82 762.48 L29.71 766.00 L25.29 766.00 L25.18 762.48 L23.22 761.67 L20.65 764.07 L17.53 760.95 L19.93 758.38 L19.12 756.42 L15.60 756.31 L15.60 751.89 L19.12 751.78 L19.93 749.82 L17.53 747.25 L20.65 744.13 L23.22 746.53 L25.18 745.72 L25.29 742.20 L29.71 742.20 L29.82 745.72 L31.78 746.53 L34.35 744.13 L37.47 747.25 L35.07 749.82 Z" stroke-width="1.7"/>
  <circle cx="27.5" cy="754.2" r="2.8" stroke-width="1.7"/>
</g>
<!-- azure -->
<g fill="#c0c0c0">
  <path d="M14.3 312.7 L21 302.4 L28 297.2 L21.4 312.7 Z"/>
  <path d="M29.3 297.6 L39.8 315 L21.8 314.4 L32.2 312.5 L26 306 Z"/>
</g>
<!-- scm badge -->
<circle cx="38.4" cy="114" r="8.9" fill="#007acc"/>
<text x="38.6" y="117.6" text-anchor="middle" font-family="Liberation Sans" font-weight="bold" font-size="10px" fill="#fff">4</text>

<!-- tab file icon -->
<g fill="#dcdcdc">
  <rect x="73.8" y="44" width="9.4" height="1.5"/>
  <rect x="73.8" y="46.5" width="5.4" height="1.5"/>
  <rect x="73.8" y="49" width="9.4" height="1.5"/>
  <rect x="73.8" y="51.5" width="7.3" height="1.5"/>
</g>
<!-- tab close -->
<path d="M189.3 44.3 L198 53 M198 44.3 L189.3 53" stroke="#e0e0e0" stroke-width="1.2" fill="none"/>
<!-- breadcrumb file icon -->
<g fill="#dcdcdc">
  <rect x="427.5" y="71.8" width="9.5" height="1.5"/>
  <rect x="427.5" y="74.4" width="5.3" height="1.5"/>
  <rect x="427.5" y="76.9" width="9.5" height="1.5"/>
  <rect x="427.5" y="79.5" width="7.2" height="1.5"/>
</g>
<!-- breadcrumb chevrons -->
<g fill="none" stroke="#b0b0b0" stroke-width="1.1">
  <path d="M179.7 72.2 L185.3 76.9 L179.7 81.7"/>
  <path d="M307 72.2 L312.6 76.9 L307 81.7"/>
  <path d="M408.2 72.2 L413.8 76.9 L408.2 81.7"/>
</g>
<!-- tab actions -->
<g fill="none" stroke="#c5c5c5" stroke-width="1.2">
  <circle cx="1302.6" cy="43.8" r="1.7"/>
  <circle cx="1313.6" cy="52.9" r="1.7"/>
  <path d="M1302.8 45.5 V52.4 H1308.6 M1306.6 50.6 L1308.6 52.4 L1306.6 54.2"/>
  <path d="M1313.4 51.2 V43.6 H1307.8 M1309.8 41.8 L1307.8 43.6 L1309.8 45.4"/>
  <rect x="1337.7" y="41.7" width="13.8" height="12.5" rx="1.5"/>
  <path d="M1344.6 41.7 V54.2"/>
</g>
<g fill="#c5c5c5">
  <circle cx="1373.9" cy="48.3" r="1.1"/>
  <circle cx="1379.6" cy="48.3" r="1.1"/>
  <circle cx="1385.2" cy="48.3" r="1.1"/>
</g>
<!-- status bar icons -->
<g fill="none" stroke="#ffffff" stroke-width="1.3">
  <circle cx="19" cy="786.1" r="1.6"/>
  <circle cx="19" cy="795.1" r="1.6"/>
  <circle cx="24.9" cy="787.6" r="1.6"/>
  <path d="M19 787.7 V793.5"/>
  <path d="M24.6 789.2 Q24.2 792 20.5 792.5 Q19.3 792.8 19.1 793.5"/>
  <!-- sync -->
  <path d="M95.6 791.5 A4.8 4.8 0 0 1 104 787.3" stroke-width="1.9"/>
  <path d="M105 789.3 A4.8 4.8 0 0 1 96.6 793.5" stroke-width="1.9"/>
</g>
<g fill="#ffffff">
  <path d="M105.6 784.5 V789.6 H100.5 Z"/>
  <path d="M95 796.3 V791.2 H100.1 Z"/>
  <!-- error -->
  <circle cx="188.2" cy="790.5" r="7.1"/>
  <!-- warning -->
  <path d="M218.8 784 L225.6 796.5 H212 Z" stroke="#fff" stroke-width="0.8" stroke-linejoin="round"/>
</g>
<path d="M185.3 787.6 L191.1 793.4 M191.1 787.6 L185.3 793.4" stroke="#007acc" stroke-width="1.8"/>
<path d="M218.8 788.3 V792.5" stroke="#007acc" stroke-width="1.7"/>
<rect x="217.9" y="793.6" width="1.8" height="1.7" fill="#007acc"/>
<!-- smiley -->
<circle cx="1343.8" cy="790.5" r="7.1" fill="#fff"/>
<circle cx="1341.3" cy="788.3" r="1.1" fill="#007acc"/>
<circle cx="1346.3" cy="788.3" r="1.1" fill="#007acc"/>
<path d="M1339.9 791.2 Q1343.8 795.8 1347.7 791.2" stroke="#007acc" stroke-width="1.4" fill="none"/>
<!-- bell -->
<path d="M1375.7 783.7 Q1380.5 784 1380.6 789.5 V792.6 L1382.5 794.6 H1369 L1370.9 792.6 V789.5 Q1371 784 1375.7 783.7 Z" fill="#fff"/>
<path d="M1374 795.4 Q1375.7 797.8 1377.5 795.4 Z" fill="#fff"/>
</svg>

</body></html>
